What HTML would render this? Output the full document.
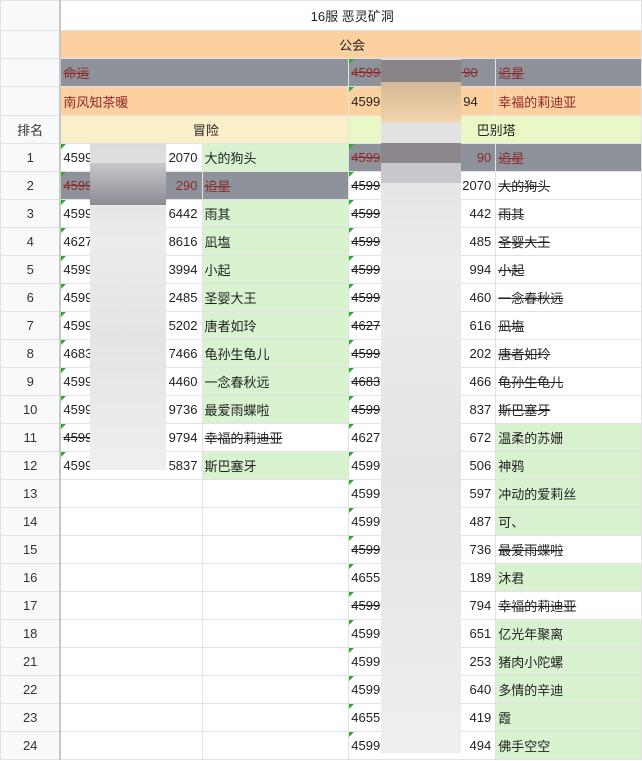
<!DOCTYPE html><html><head><meta charset="utf-8"><style>
body{margin:0;width:642px;height:761px;overflow:hidden;background:#fff;font-family:"Liberation Sans","Noto Sans CJK SC",sans-serif;font-size:13px;color:#222;position:relative}
table{border-collapse:collapse;table-layout:fixed;position:absolute;left:0;top:0}
td{border:1px solid #e2e2e2;padding:0 0 0 2px;height:27px;white-space:nowrap;overflow:hidden;position:relative}
td.h{background:#f8f9fa;text-align:center;color:#333;padding:0;border-right:2px solid #c8c8c8}
.c{text-align:center}
.o{background:#fdd09f}
.g{background:#8e929b;color:#8b2a2a;text-decoration:line-through}
.gr{background:#d9f2d0}
.s{text-decoration:line-through}
.r{color:#8b2a2a}
.y{background:#fbefc9}
.ly{background:#eaf8c8}
.t::before{content:"";position:absolute;left:0;top:0;border-top:5px solid #2fa82f;border-right:5px solid transparent}
.blur{position:absolute;background:linear-gradient(#dcdcdc,#ececec 30%,#e4e4e4 60%,#efefef)}
</style></head><body>
<table>
<colgroup><col style="width:60px"><col style="width:142px"><col style="width:147px"><col style="width:147px"><col style="width:146px"></colgroup>
<tr><td class="h" style="height:29px"></td><td colspan="4" class="c" style="background:#fff">16服 恶灵矿洞</td></tr>
<tr><td class="h"></td><td colspan="4" class="c o">公会</td></tr>
<tr><td class="h"></td><td colspan="2" class="g">命运</td><td class="g t">4599&nbsp;&nbsp;&nbsp;&nbsp;&nbsp;&nbsp;&nbsp;&nbsp;&nbsp;&nbsp;&nbsp;&nbsp;&nbsp;&nbsp;&nbsp;&nbsp;&nbsp;&nbsp;&nbsp;&nbsp;&nbsp;&nbsp;&nbsp;90</td><td class="g">追星</td></tr>
<tr><td class="h" style="height:28px"></td><td colspan="2" class="o r">南风知茶暖</td><td class="o t">4599&nbsp;&nbsp;&nbsp;&nbsp;&nbsp;&nbsp;&nbsp;&nbsp;&nbsp;&nbsp;&nbsp;&nbsp;&nbsp;&nbsp;&nbsp;&nbsp;&nbsp;&nbsp;&nbsp;&nbsp;&nbsp;&nbsp;&nbsp;94</td><td class="o r">幸福的莉迪亚</td></tr>
<tr><td class="h">排名</td><td colspan="2" class="c y">冒险</td><td colspan="2" class="c ly">巴别塔</td></tr>
<tr><td class="h">1</td><td class="t">4599<span style="float:right;padding-right:4px">2070</span></td><td class="gr">大的狗头</td><td class="g t">4599<span style="float:right;padding-right:4px">90</span></td><td class="g">追星</td></tr>
<tr><td class="h">2</td><td class="g t">4599<span style="float:right;padding-right:4px">290</span></td><td class="g">追星</td><td class="t s">4599<span style="float:right;padding-right:4px">2070</span></td><td class="s">大的狗头</td></tr>
<tr><td class="h">3</td><td class="t">4599<span style="float:right;padding-right:4px">6442</span></td><td class="gr">雨其</td><td class="t s">4599<span style="float:right;padding-right:4px">442</span></td><td class="s">雨其</td></tr>
<tr><td class="h">4</td><td class="t">4627<span style="float:right;padding-right:4px">8616</span></td><td class="gr">凪塩</td><td class="t s">4599<span style="float:right;padding-right:4px">485</span></td><td class="s">圣婴大王</td></tr>
<tr><td class="h">5</td><td class="t">4599<span style="float:right;padding-right:4px">3994</span></td><td class="gr">小起</td><td class="t s">4599<span style="float:right;padding-right:4px">994</span></td><td class="s">小起</td></tr>
<tr><td class="h">6</td><td class="t">4599<span style="float:right;padding-right:4px">2485</span></td><td class="gr">圣婴大王</td><td class="t s">4599<span style="float:right;padding-right:4px">460</span></td><td class="s">一念春秋远</td></tr>
<tr><td class="h">7</td><td class="t">4599<span style="float:right;padding-right:4px">5202</span></td><td class="gr">唐者如玲</td><td class="t s">4627<span style="float:right;padding-right:4px">616</span></td><td class="s">凪塩</td></tr>
<tr><td class="h">8</td><td class="t">4683<span style="float:right;padding-right:4px">7466</span></td><td class="gr">龟孙生龟儿</td><td class="t s">4599<span style="float:right;padding-right:4px">202</span></td><td class="s">唐者如玲</td></tr>
<tr><td class="h">9</td><td class="t">4599<span style="float:right;padding-right:4px">4460</span></td><td class="gr">一念春秋远</td><td class="t s">4683<span style="float:right;padding-right:4px">466</span></td><td class="s">龟孙生龟儿</td></tr>
<tr><td class="h">10</td><td class="t">4599<span style="float:right;padding-right:4px">9736</span></td><td class="gr">最爱雨蝶啦</td><td class="t s">4599<span style="float:right;padding-right:4px">837</span></td><td class="s">斯巴塞牙</td></tr>
<tr><td class="h">11</td><td class="t s">4599<span style="float:right;padding-right:4px">9794</span></td><td class="s">幸福的莉迪亚</td><td class="t">4627<span style="float:right;padding-right:4px">672</span></td><td class="gr">温柔的苏姗</td></tr>
<tr><td class="h">12</td><td class="t">4599<span style="float:right;padding-right:4px">5837</span></td><td class="gr">斯巴塞牙</td><td class="t">4599<span style="float:right;padding-right:4px">506</span></td><td class="gr">神鸦</td></tr>
<tr><td class="h">13</td><td></td><td></td><td class="t">4599<span style="float:right;padding-right:4px">597</span></td><td class="gr">冲动的爱莉丝</td></tr>
<tr><td class="h">14</td><td></td><td></td><td class="t">4599<span style="float:right;padding-right:4px">487</span></td><td class="gr">可、</td></tr>
<tr><td class="h">15</td><td></td><td></td><td class="t s">4599<span style="float:right;padding-right:4px">736</span></td><td class="s">最爱雨蝶啦</td></tr>
<tr><td class="h">16</td><td></td><td></td><td class="t">4655<span style="float:right;padding-right:4px">189</span></td><td class="gr">沐君</td></tr>
<tr><td class="h">17</td><td></td><td></td><td class="t s">4599<span style="float:right;padding-right:4px">794</span></td><td class="s">幸福的莉迪亚</td></tr>
<tr><td class="h">18</td><td></td><td></td><td class="t">4599<span style="float:right;padding-right:4px">651</span></td><td class="gr">亿光年聚离</td></tr>
<tr><td class="h">21</td><td></td><td></td><td class="t">4599<span style="float:right;padding-right:4px">253</span></td><td class="gr">猪肉小陀螺</td></tr>
<tr><td class="h">22</td><td></td><td></td><td class="t">4599<span style="float:right;padding-right:4px">640</span></td><td class="gr">多情的辛迪</td></tr>
<tr><td class="h">23</td><td></td><td></td><td class="t">4655<span style="float:right;padding-right:4px">419</span></td><td class="gr">霞</td></tr>
<tr><td class="h">24</td><td></td><td></td><td class="t">4599<span style="float:right;padding-right:4px">494</span></td><td class="gr">佛手空空</td></tr>
</table>
<div class="blur" style="left:90px;top:143px;width:76px;height:327px"></div>
<div style="position:absolute;left:90px;top:163px;width:76px;height:42px;background:linear-gradient(#c8c8cc,#8e8a92)"></div>
<div class="blur" style="left:381px;top:57px;width:80px;height:696px"></div>
<div style="position:absolute;left:381px;top:60px;width:80px;height:22px;background:#8a8488"></div>
<div style="position:absolute;left:381px;top:82px;width:80px;height:40px;background:linear-gradient(#d4b896,#f2d4ac)"></div>
<div style="position:absolute;left:381px;top:143px;width:80px;height:20px;background:#8c878d"></div>
<div style="position:absolute;left:381px;top:163px;width:80px;height:20px;background:#c8c8cc"></div>
</body></html>
